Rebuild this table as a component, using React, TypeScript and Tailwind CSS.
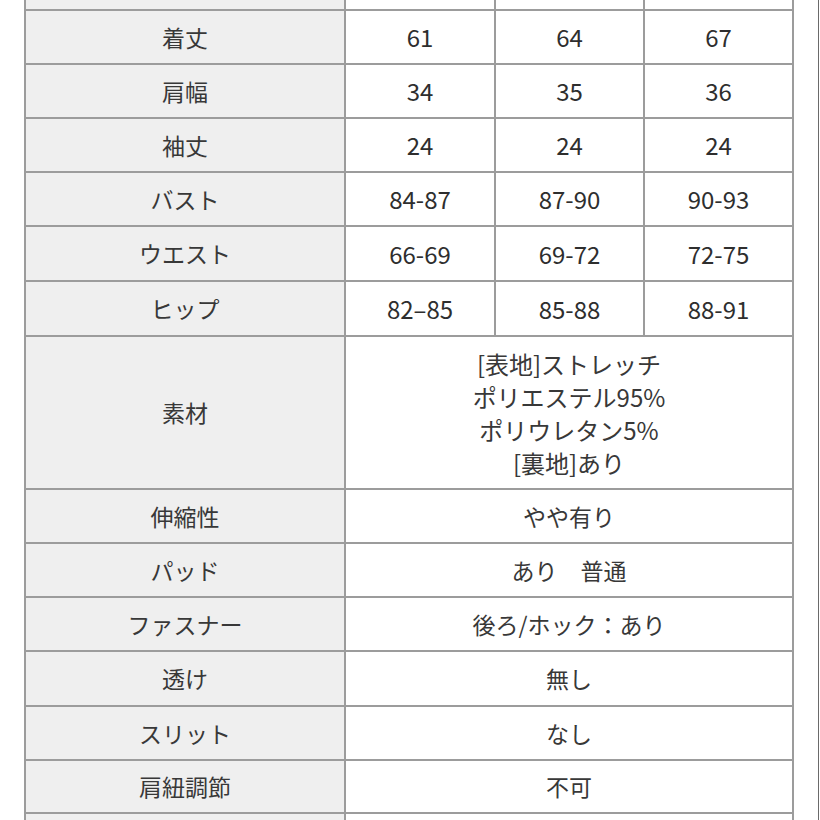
const rows: Array<{ label: string; values: Array<string>; h: string }> = [
  { label: "着丈", values: ["61", "64", "67"], h: "h-[54px]" },
  { label: "肩幅", values: ["34", "35", "36"], h: "h-[54px]" },
  { label: "袖丈", values: ["24", "24", "24"], h: "h-[54px]" },
  { label: "バスト", values: ["84-87", "87-90", "90-93"], h: "h-[54px]" },
  { label: "ウエスト", values: ["66-69", "69-72", "72-75"], h: "h-[55px]" },
  { label: "ヒップ", values: ["82–85", "85-88", "88-91"], h: "h-[55px]" },
]

const wideRows: Array<{ label: string; value: string; h: string }> = [
  { label: "伸縮性", value: "やや有り", h: "h-[54px]" },
  { label: "パッド", value: "あり　普通", h: "h-[54px]" },
  { label: "ファスナー", value: "後ろ/ホック：あり", h: "h-[54px]" },
  { label: "透け", value: "無し", h: "h-[55px]" },
  { label: "スリット", value: "なし", h: "h-[54px]" },
  { label: "肩紐調節", value: "不可", h: "h-[53px]" },
]

const font = { fontFamily: '"Noto Sans CJK JP", "Noto Sans", sans-serif' }

const LabelCell = ({ children }: { children?: React.ReactNode }) => (
  <div className="flex items-center justify-center border-r-2 border-[#9c9c9c] bg-[#efefef]">
    {children}
  </div>
)

export default function App() {
  return (
    <div
      className="flex h-[820px] w-[820px] overflow-hidden bg-white text-[23px] text-[#383838]"
      style={font}
    >
      <div className="ml-[24px] flex w-[770px] shrink-0 flex-col border-x-2 border-[#9c9c9c]">
        <div className="grid h-[9px] shrink-0 grid-cols-[320px_150px_149px_147px]">
          <LabelCell />
          <div className="border-r-2 border-[#9c9c9c]" />
          <div className="border-r-2 border-[#9c9c9c]" />
          <div />
        </div>
        {rows.map((row) => (
          <div
            key={row.label}
            className={`grid shrink-0 grid-cols-[320px_150px_149px_147px] border-t-2 border-[#9c9c9c] ${row.h}`}
          >
            <LabelCell>{row.label}</LabelCell>
            <div className="flex items-center justify-center border-r-2 border-[#9c9c9c] text-[24px] text-[#2e2e2e]">
              {row.values[0]}
            </div>
            <div className="flex items-center justify-center border-r-2 border-[#9c9c9c] text-[24px] text-[#2e2e2e]">
              {row.values[1]}
            </div>
            <div className="flex items-center justify-center text-[24px] text-[#2e2e2e]">
              {row.values[2]}
            </div>
          </div>
        ))}
        <div className="grid h-[153px] shrink-0 grid-cols-[320px_446px] border-t-2 border-[#9c9c9c]">
          <LabelCell>素材</LabelCell>
          <div className="flex flex-col items-center justify-center text-[24px] leading-[33px]">
            <span>[表地]ストレッチ</span>
            <span>ポリエステル95%</span>
            <span>ポリウレタン5%</span>
            <span>[裏地]あり</span>
          </div>
        </div>
        {wideRows.map((row) => (
          <div
            key={row.label}
            className={`grid shrink-0 grid-cols-[320px_446px] border-t-2 border-[#9c9c9c] ${row.h}`}
          >
            <LabelCell>{row.label}</LabelCell>
            <div className="flex items-center justify-center">{row.value}</div>
          </div>
        ))}
        <div className="grid h-[60px] shrink-0 grid-cols-[320px_446px] border-t-2 border-[#9c9c9c]">
          <LabelCell />
          <div />
        </div>
      </div>
      <div className="flex-1" />
      <div className="mr-[1px] w-[1px] bg-[#6a6a6a]" />
    </div>
  )
}
